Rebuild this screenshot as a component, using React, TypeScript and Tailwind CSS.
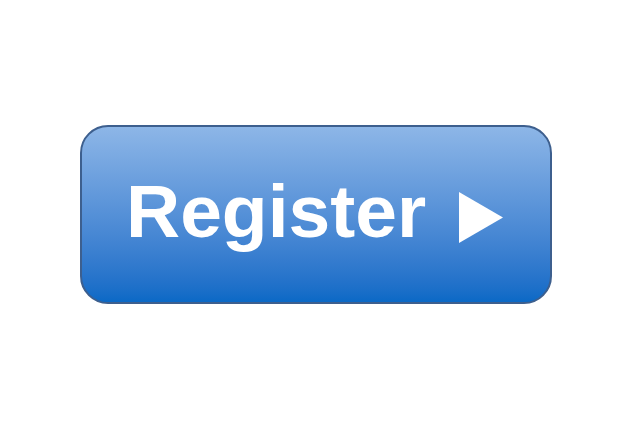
export default function App() {
  return (
    <div className="h-[437px] w-[640px] bg-white pl-[80px] pt-[125px]">
      <button
        className="flex h-[179px] w-[472px] items-center gap-[33px] rounded-[28px] border-2 border-[#3d5f8e] bg-gradient-to-b from-[#8db6e7] to-[#0a69c6] pl-[44px] text-white"
        style={{ fontFamily: '"Liberation Sans", Arial, sans-serif' }}
      >
        <span className="mb-[6px] text-[75px] font-bold leading-none">Register</span>
        {/* play arrow */}
        <svg width="44" height="51" viewBox="0 0 44 51" className="mt-[6px]">
          <polygon points="0,0 44,25.5 0,51" fill="white" />
        </svg>
      </button>
    </div>
  );
}
